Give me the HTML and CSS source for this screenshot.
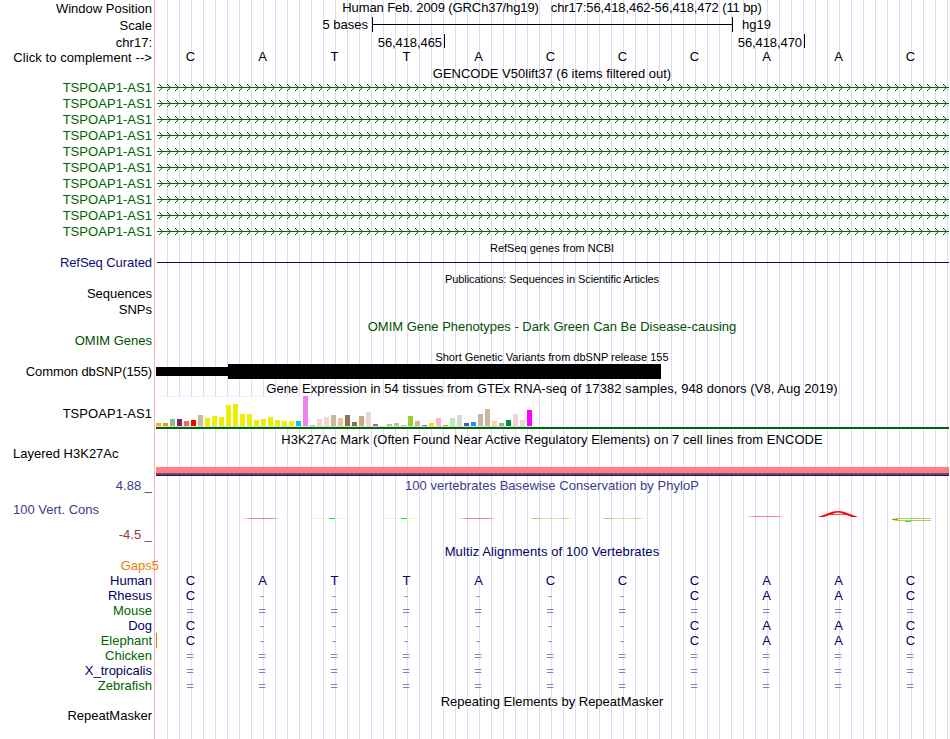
FILE: index.html
```
<!DOCTYPE html>
<html lang="en">
<head>
    <meta charset="UTF-8">
    <meta name="viewport" content="width=device-width, initial-scale=1.0">
    <title>Human chr17:56,418,462-56,418,472 Genome Browser</title>
    <link rel="stylesheet" href="styles.css">
</head>
<body>
    <div class="browser">
        <div class="row h17">
            <div class="label">Window Position</div>
            <div class="title position"><span>Human Feb. 2009 (GRCh37/hg19)</span><span>chr17:56,418,462-56,418,472 (11 bp)</span></div>
        </div>
        <div class="row h17">
            <div class="label">Scale</div>
            <div class="track scale">
                <span class="scale-text">5 bases</span>
                <div class="scale-bar"></div>
                <span class="assembly">hg19</span>
            </div>
        </div>
        <div class="row h16">
            <div class="label chrom">chr17:</div>
            <div class="track ruler">
                <span class="tick">56,418,465</span>
                <span class="tick">56,418,470</span>
            </div>
        </div>
        <div class="row h16 sequence">
            <div class="label click">Click to complement --&gt;</div>
            <div class="bases" data-seq="CATTACCCAAC"></div>
        </div>

        <!-- GENCODE -->
        <div class="row h14"><div class="title">GENCODE V50lift37 (6 items filtered out)</div></div>
        <div id="gencode"></div>

        <!-- RefSeq -->
        <div class="row h15"><div class="title small">RefSeq genes from NCBI</div></div>
        <div class="row h15">
            <div class="label refseq">RefSeq Curated</div>
            <div class="track"><div class="refseq-line"></div></div>
        </div>

        <!-- Publications -->
        <div class="row h16"><div class="title small pubs">Publications: Sequences in Scientific Articles</div></div>
        <div class="row h16"><div class="label raised">Sequences</div></div>
        <div class="row h16"><div class="label raised">SNPs</div></div>

        <!-- OMIM -->
        <div class="row h16 omim"><div class="title">OMIM Gene Phenotypes - Dark Green Can Be Disease-causing</div></div>
        <div class="row h15 omim"><div class="label omim-label">OMIM Genes</div></div>

        <!-- dbSNP -->
        <div class="row h15"><div class="title small">Short Genetic Variants from dbSNP release 155</div></div>
        <div class="row h15">
            <div class="label narrow">Common dbSNP(155)</div>
            <div class="track snp">
                <div class="snp-thin"></div>
                <div class="snp-thick"></div>
            </div>
        </div>

        <!-- GTEx -->
        <div class="row h17"><div class="title wide lowered">Gene Expression in 54 tissues from GTEx RNA-seq of 17382 samples, 948 donors (V8, Aug 2019)</div></div>
        <div class="row h34">
            <div class="label wide">TSPOAP1-AS1</div>
            <div class="track gtex">
                <div class="gtex-bars" id="gtexBars"></div>
                <div class="gtex-gene"></div>
            </div>
        </div>

        <!-- H3K27Ac -->
        <div class="row h17 h3k"><div class="title wide">H3K27Ac Mark (Often Found Near Active Regulatory Elements) on 7 cell lines from ENCODE</div></div>
        <div class="row h29">
            <div class="label left layered">Layered H3K27Ac</div>
            <div class="track signal-wrap"><div class="signal"></div></div>
        </div>

        <!-- Conservation -->
        <div class="row h18 phylop">
            <div class="label limit">4.88 _</div>
            <div class="title wide">100 vertebrates Basewise Conservation by PhyloP</div>
        </div>
        <div class="row h49 phylop">
            <div class="label cons">
                <span class="cons-name">100 Vert. Cons</span>
                <span class="limit low">-4.5 _</span>
            </div>
            <svg class="wiggle" width="793" height="49" viewBox="156 494 793 49">
                <defs>
                    <linearGradient id="fadeRed">
                        <stop offset="0" stop-color="#f00" stop-opacity="0"/>
                        <stop offset=".25" stop-color="#f00" stop-opacity=".5"/>
                        <stop offset=".75" stop-color="#f00" stop-opacity=".5"/>
                        <stop offset="1" stop-color="#f00" stop-opacity="0"/>
                    </linearGradient>
                    <linearGradient id="fadeOlive">
                        <stop offset="0" stop-color="#999900" stop-opacity="0"/>
                        <stop offset=".12" stop-color="#999900" stop-opacity=".75"/>
                        <stop offset=".28" stop-color="#999900" stop-opacity=".35"/>
                        <stop offset=".6" stop-color="#999900" stop-opacity=".25"/>
                        <stop offset=".88" stop-color="#999900" stop-opacity=".5"/>
                        <stop offset="1" stop-color="#999900" stop-opacity="0"/>
                    </linearGradient>
                </defs>
                <rect x="241" y="518" width="41" height="1" fill="url(#fadeRed)"/>
                <rect x="457" y="518" width="41" height="1" fill="url(#fadeRed)"/>
                <rect x="745" y="516" width="41" height="1" fill="url(#fadeRed)"/>
                <g fill="#0f0">
                    <rect x="313" y="518" width="37" height="1" opacity=".14"/>
                    <rect x="329" y="518" width="6" height="1"/>
                    <rect x="385" y="518" width="37" height="1" opacity=".14"/>
                    <rect x="401" y="518" width="6" height="1"/>
                </g>
                <rect x="530" y="518" width="42" height="1" fill="url(#fadeOlive)"/>
                <rect x="602" y="518" width="42" height="1" fill="url(#fadeOlive)"/>
                <path d="M818 517 L833 511.5 Q838 510.5 843 511.5 L858 517 L852 517 L841 513 Q838 512 835 513 L824 517 Z" fill="#f00"/>
                <path d="M830 514.5 H846" stroke="#f00" stroke-width=".7"/>
                <path d="M931 518.5 H897 Q890 519.5 897 520.5 H931" fill="none" stroke="#999900" stroke-opacity=".6"/>
                <path d="M892 519.5 H898" stroke="#999900"/>
                <rect x="905" y="521" width="6" height="1" fill="#0f0"/>
            </svg>
        </div>

        <!-- Multiz -->
        <div class="row h15 multiz"><div class="title wider lowered">Multiz Alignments of 100 Vertebrates</div></div>
        <div class="row h15"><div class="label gaps">Gaps<span>5</span></div></div>
        <div class="multiz" id="multiz"></div>

        <div class="row h15"><div class="title lowered">Repeating Elements by RepeatMasker</div></div>
        <div class="row h16"><div class="label raised">RepeatMasker</div></div>
    </div>

    <script>
        // Splits a sequence into one cell per base
        function drawBases(el, seq) {
            for (const base of seq) {
                const cell = document.createElement("span");
                cell.textContent = base;
                if (base === "-" || base === "=") cell.className = "gap";
                el.appendChild(cell);
            }
        }

        document.querySelectorAll(".bases[data-seq]").forEach(el => drawBases(el, el.dataset.seq));

        // GENCODE transcripts, intron arrows point to the + strand
        let arrows = "";
        for (let x = 3; x < 792; x += 8) {
            arrows += `M${x} 4l3.5 3.5l-3.5 3.5`;
        }
        const gencode = document.getElementById("gencode");
        for (let i = 0; i < 10; i++) {
            gencode.innerHTML += `
                <div class="row h16">
                    <div class="label gene wide raised">TSPOAP1-AS1</div>
                    <svg class="intron" width="793" height="16">
                        <path class="intron-arrows" d="${arrows}"/>
                        <path class="intron-line" d="M1 7.5H793"/>
                    </svg>
                </div>`;
        }

        // GTEx tissues: [color, height]
        const brain = [8, 10, 9, 21, 22, 12, 12, 6, 7, 9, 6, 5, 5].map(h => ["#eeee00", h]);
        const tissues = [
            ["#ffa54f", 3], ["#ee9a00", 3], ["#8fbc8f", 7], ["#8b1c62", 7],
            ["#ee6a50", 5], ["#ff0000", 6], ["#cdb79e", 11],
            ...brain,
            ["#00cdcd", 5], ["#ee82ee", 30], ["#9ac0cd", 1], ["#eed5d2", 7],
            ["#eed5d2", 9], ["#cdb79e", 11], ["#eec591", 8], ["#8b7355", 11],
            ["#8b7355", 4], ["#cdaa7d", 10], ["#eed5d2", 14], ["#b452cd", 2],
            ["#7a378b", 0], ["#cdb79e", 2], ["#cdb79e", 3], ["#cdb79e", 1],
            ["#9acd32", 10], ["#cdb79e", 5], ["#7a67ee", 1], ["#ffd700", 3],
            ["#ffb6c1", 8], ["#cd9b1d", 1], ["#b4eeb4", 8], ["#d9d9d9", 11],
            ["#3a5fcd", 3], ["#1e90ff", 4], ["#cdb79e", 12], ["#cdb79e", 17],
            ["#ffd39b", 5], ["#a6a6a6", 3], ["#008b45", 6], ["#eed5d2", 12],
            ["#eed5d2", 6], ["#ff00ff", 16]
        ];
        document.getElementById("gtexBars").innerHTML = tissues
            .map(([color, h]) => `<i style="height:${h}px;background:${color}"></i>`)
            .join("");

        // Multiz alignment, "-" is a gap and "=" is unalignable sequence
        const species = [
            ["Human", "CATTACCCAAC", "blue"],
            ["Rhesus", "C------CAAC", "blue"],
            ["Mouse", "===========", "green"],
            ["Dog", "C------CAAC", "blue"],
            ["Elephant", "C------CAAC", "green insert"],
            ["Chicken", "===========", "green"],
            ["X_tropicalis", "===========", "blue"],
            ["Zebrafish", "===========", "green"]
        ];
        const multiz = document.getElementById("multiz");
        species.forEach(([name, seq, cls]) => {
            const row = document.createElement("div");
            row.className = "row h15 " + cls;
            row.innerHTML = `<div class="label">${name}</div><div class="bases"></div>`;
            drawBases(row.lastChild, seq);
            multiz.appendChild(row);
        });
    </script>
</body>
</html>
```
FILE: styles.css
```
* {
    box-sizing: border-box;
}

body {
    margin: 0;
    background: #fff;
    color: #000;
    font-family: "Liberation Sans", Arial, Helvetica, sans-serif;
    font-size: 13px;
    line-height: 15px;
}

/* guide lines every 12px, pink edge between labels and tracks */
.browser {
    width: 949px;
    height: 739px;
    overflow: hidden;
    background:
        linear-gradient(#ffb4b4, #ffb4b4) 154px 0 / 1px 100% no-repeat,
        repeating-linear-gradient(90deg, transparent 0 11px, #dcdcf8 11px 12px) 156px 0 no-repeat;
}

.row {
    display: flex;
    align-items: center;
    white-space: nowrap;
}

.h14 { height: 14px; }
.h15 { height: 15px; }
.h16 { height: 16px; }
.h17 { height: 17px; }
.h18 { height: 18px; }
.h29 { height: 29px; }
.h34 { height: 34px; }
.h49 { height: 49px; }

.label {
    flex: none;
    width: 156px;
    padding-right: 4px;
    text-align: right;
}

.label.left {
    padding-left: 13px;
    text-align: left;
}

.title {
    width: 792px;
    text-align: center;
}

.title:first-child {
    margin-left: 156px;
}

.title.small {
    padding-top: 2px;
    font-size: 11px;
}

.wide { letter-spacing: .045px; }
.wider { letter-spacing: .1px; }
.narrow { letter-spacing: -.1px; }

.raised { padding-bottom: 2px; }
.lowered { padding-top: 2px; }

.track {
    width: 793px;
    align-self: stretch;
}

/* position and ruler */
.position {
    display: flex;
    justify-content: center;
    gap: 12px;
    padding-bottom: 2px;
    letter-spacing: -.1px;
}

.scale {
    display: flex;
}

.scale-text {
    width: 213px;
    padding-right: 1px;
    text-align: right;
}

.scale-bar {
    width: 361px;
    height: 15px;
    margin-left: 3px;
    border: solid #000;
    border-width: 0 1px;
    background: linear-gradient(#000, #000) 0 7px / 100% 1px no-repeat;
}

.assembly {
    margin-left: 9px;
}

.chrom {
    padding-top: 1px;
}

.ruler {
    display: flex;
    letter-spacing: -.08px;
}

.tick {
    width: 360px;
    height: 14px;
    padding: 1px 2px 0 0;
    border-right: 1px solid #000;
    text-align: right;
}

.tick:first-child {
    width: 289px;
}

.click {
    padding-bottom: 1px;
    letter-spacing: .08px;
}

.bases {
    display: flex;
}

.bases span {
    width: 72px;
    padding-right: 3px;
    text-align: center;
}

.bases .gap {
    padding-right: 4px;
}

.sequence .bases {
    padding-bottom: 4px;
}

/* genes */
.gene {
    color: #006400;
}

.intron {
    display: block;
    fill: none;
    stroke: #006400;
}

.intron-line {
    shape-rendering: crispEdges;
}

.refseq {
    color: #0c0c78;
    letter-spacing: -.08px;
}

.refseq-line {
    height: 1px;
    margin: 7px 0 0 1px;
    background: #0c0c78;
}

.pubs {
    letter-spacing: -.08px;
}

.omim {
    color: #005000;
}

.omim-label {
    padding-bottom: 2px;
}

/* dbSNP */
.snp {
    display: flex;
    align-items: center;
}

.snp-thin {
    width: 72px;
    height: 9px;
    background: #000;
}

.snp-thick {
    width: 433px;
    height: 15px;
    background: #000;
}

/* GTEx */
.gtex-bars {
    display: flex;
    align-items: flex-end;
    gap: 2px;
    width: 378px;
    height: 31px;
    border-bottom: 1px solid #ddd;
    background: #fff;
    box-shadow: inset -1px 1px #f2f2f2;
}

.gtex-bars i {
    width: 5px;
}

.gtex-gene {
    height: 2px;
    background: #006400;
}

/* H3K27Ac */
.h3k {
    padding-top: 2px;
}

.layered {
    align-self: flex-start;
    margin-top: -1px;
}

.signal-wrap {
    display: flex;
    align-items: flex-end;
}

.signal {
    width: 100%;
    height: 9px;
    background: #ff8080;
    border-bottom: 1px solid #28105a;
    box-shadow: inset 0 -2px #784078;
}

/* conservation */
.phylop {
    color: #3c3c8c;
}

.cons {
    display: flex;
    flex-direction: column;
    height: 49px;
    padding-top: 8px;
}

.cons-name {
    padding-left: 13px;
    text-align: left;
}

.low {
    margin-top: 10px;
    color: #8c3c3c;
}

.multiz {
    color: #000064;
}

.gaps {
    width: 159px;
    padding-right: 0;
    color: #e68200;
}

.multiz .green .label {
    color: #006400;
}

.multiz .gap {
    color: #8080b4;
}

.insert .bases {
    box-shadow: inset 1px 0 #e68200;
}
```
